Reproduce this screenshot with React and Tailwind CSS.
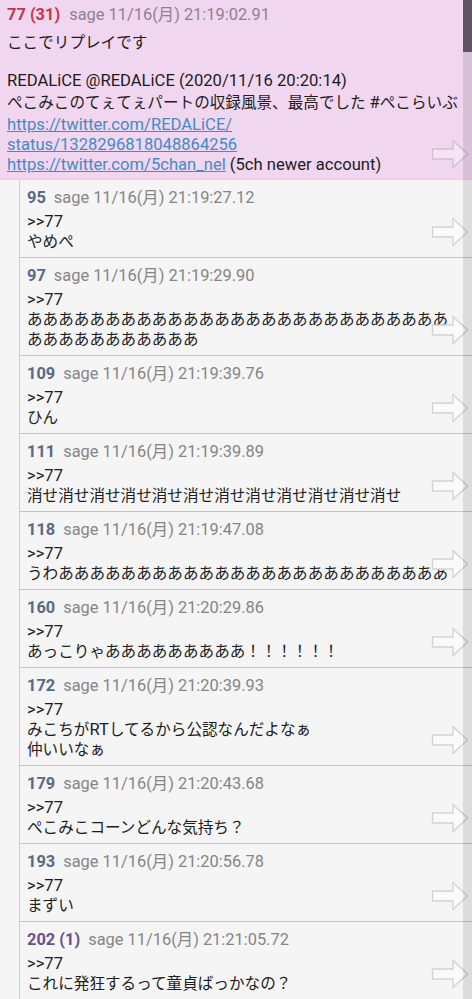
import React from "react";

const Arrow = ({ pink }) => (
  <svg
    className="absolute right-[3px] bottom-[10px]"
    width="38"
    height="30"
    viewBox="0 0 38 30"
  >
    <path
      d="M1.5 10 H22 V1.5 L36.5 15 L22 28.5 V20 H1.5 Z"
      fill={pink ? "#f6e4f5" : "#fafafa"}
      stroke={pink ? "#d2bdd1" : "#d2d2d2"}
      strokeWidth="1.3"
      strokeLinejoin="miter"
    />
  </svg>
);

const L = ({ children }) => <span className="text-[16.6px]">{children}</span>;

const replies = [
  { n: "95", t: "21:19:27.12", lines: ["やめぺ"] },
  {
    n: "97",
    t: "21:19:29.90",
    lines: ["あ".repeat(27), "あ".repeat(11)],
  },
  { n: "109", t: "21:19:39.76", lines: ["ひん"] },
  { n: "111", t: "21:19:39.89", lines: ["消せ".repeat(12)] },
  { n: "118", t: "21:19:47.08", lines: ["うわ" + "あ".repeat(25)] },
  { n: "160", t: "21:20:29.86", lines: ["あっこりゃ" + "あ".repeat(9) + "！".repeat(6)] },
  {
    n: "172",
    t: "21:20:39.93",
    lines: [
      <>
        みこちが<L>RT</L>してるから公認なんだよなぁ
      </>,
      "仲いいなぁ",
    ],
  },
  { n: "179", t: "21:20:43.68", lines: ["ぺこみこコーンどんな気持ち？"] },
  { n: "193", t: "21:20:56.78", lines: ["まずい"] },
  { n: "202 (1)", t: "21:21:05.72", lines: ["これに発狂するって童貞ばっかなの？"], purple: true },
];

export default function App() {
  return (
    <div
      className="relative w-[472px] h-[999px] overflow-hidden bg-[#f5f5f5] text-[15.6px] text-[#1c1c1c]"
      style={{ fontFamily: "Roboto, 'Noto Sans CJK JP', sans-serif" }}
    >
      {/* top post */}
      <div className="relative bg-[#f1d6ef] border-b border-[#e6cfe4] px-[7px] pt-[4px] pb-[5px]">
        <div className="flex items-center gap-[9px] leading-[22px] whitespace-nowrap text-[16.4px]">
          <span className="font-bold text-[#c2384a]">77 (31)</span>
          <span className="text-[#8a8390]">sage 11/16(月) 21:19:02.91</span>
        </div>
        <div className="mt-[7px] leading-[20px] whitespace-nowrap">
          <div>ここでリプレイです</div>
          <div className="h-[17px]"></div>
          <div className="leading-[22px] text-[16.6px]">REDALiCE @REDALiCE (2020/11/16 20:20:14)</div>
          <div className="leading-[22px]">
            ぺこみこのてぇてぇパートの収録風景、最高でした <L>#</L>ぺこらいぶ
          </div>
          <div className="leading-[21px] text-[16.6px] text-[#3f8cc6] underline">https://twitter.com/REDALiCE/</div>
          <div className="leading-[20px] text-[16.6px] text-[#3f8cc6] underline">status/1328296818048864256</div>
          <div className="leading-[19px] text-[16.6px]">
            <span className="text-[#3f8cc6] underline">https://twitter.com/5chan_nel</span> (5ch newer account)
          </div>
        </div>
        <Arrow pink />
      </div>

      {/* replies */}
      <div className="ml-[19px] border-l border-[#cfcfcf]">
        {replies.map((r) => (
          <div key={r.n} className="relative border-b border-[#c4c4c4] pl-[7px] pt-[7px] pb-[5px]">
            <div className="flex items-center gap-[8px] leading-[22px] whitespace-nowrap text-[16.4px]">
              <span className={r.purple ? "font-bold text-[#6c4f8e]" : "font-bold text-[#5a6985]"}>
                {r.n}
              </span>
              <span className="text-[#858585]">sage 11/16(月) {r.t}</span>
            </div>
            <div className="mt-[3px] leading-[20px] whitespace-nowrap">
              <div className="text-[16.6px]">&gt;&gt;77</div>
              {r.lines.map((l, i) => (
                <div key={i}>{l}</div>
              ))}
            </div>
            <Arrow />
          </div>
        ))}
      </div>

      {/* scrollbar overlay */}
      <div className="absolute top-0 right-0 w-[9px] h-full bg-black/10">
        <div className="h-[52px] bg-[#4e3f50]/85"></div>
      </div>
    </div>
  );
}
